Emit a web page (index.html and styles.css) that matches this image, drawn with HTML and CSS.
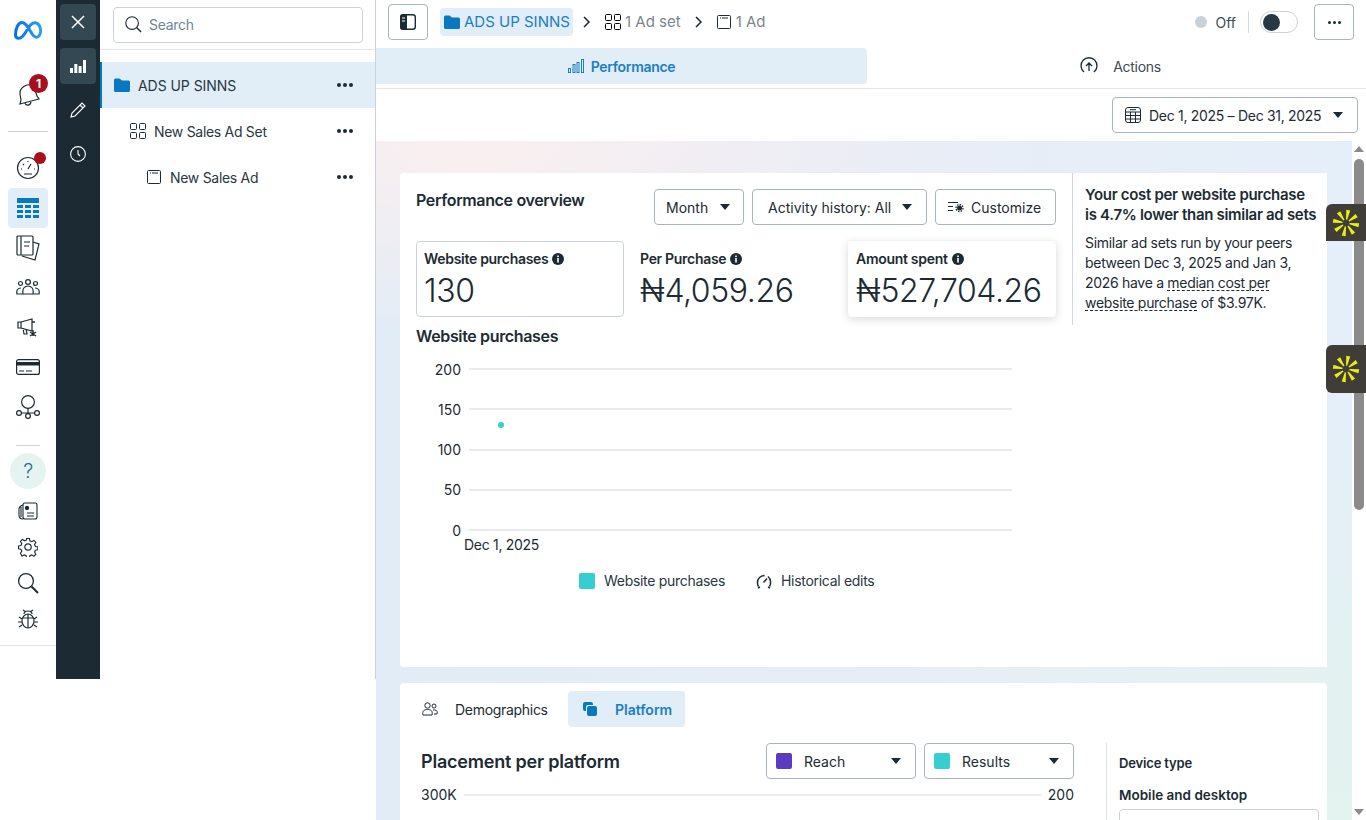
FILE: index.html
```html
<!DOCTYPE html>
<html lang="en">
<head>
  <meta charset="UTF-8" />
  <title>Ads Manager</title>
  <link rel="stylesheet" href="styles.css">
</head>
<body>
  <!-- Global nav rail -->
  <nav class="rail">
    <div class="rail-logo">
      <svg width="30" height="21" viewBox="0 0 30 21"><defs><linearGradient id="metaGrad" x1="0" y1="0" x2="1" y2="0"><stop offset="0" stop-color="#0a6fe8"/><stop offset="1" stop-color="#25a0f5"/></linearGradient></defs><path d="M2.500 15C2.500 9 5 2.500 9 2.500C13 2.500 16 9 19.500 14.500C21.500 17.500 24 18 26 16C28 13.500 28 9 26.500 6C24.500 2 20.500 1.500 17.500 5C14.500 8.500 12.500 13.500 9.500 16.500C7 19 2.500 19 2.500 15Z" fill="none" stroke="url(#metaGrad)" stroke-width="3"/></svg>
    </div>
    <div class="rail-item rail-bell">
      <svg class="ico" width="24" height="26" viewBox="0 0 24 26"><path d="M11 4c4-1 7 1 8 5l2 6 2 3-19 5 1-4-1-6c-1-4 3-8 7-9zM9 22c1 3 5 3 6-1" fill="none" stroke="#1c2b33" stroke-width="1.200"/></svg>
      <span class="badge">1</span>
    </div>
    <div class="rail-rule"></div>
    <div class="rail-item rail-gauge">
      <svg width="24" height="24" viewBox="0 0 24 24" fill="none" stroke="#1c2b33" stroke-width="1.200"><circle cx="12" cy="12" r="10.500"/><path d="M12 13l3-5M5 13h1M18 13h1M7 8l1 1M12 5v1M8 18h8"/></svg>
      <span class="dot-alert"></span>
    </div>
    <div class="rail-item rail-active">
      <svg width="22" height="20" viewBox="0 0 22 20" fill="#0a78be"><rect width="22" height="5"/><rect y="7" width="6" height="3"/><rect x="8" y="7" width="6" height="3"/><rect x="16" y="7" width="6" height="3"/><rect y="12" width="6" height="3"/><rect x="8" y="12" width="6" height="3"/><rect x="16" y="12" width="6" height="3"/><rect y="17" width="6" height="3"/><rect x="8" y="17" width="6" height="3"/><rect x="16" y="17" width="6" height="3"/></svg>
    </div>
    <div class="rail-item rail-short">
      <svg width="24" height="26" viewBox="0 0 24 26" fill="none" stroke="#1c2b33" stroke-width="1.200"><rect x="1" y="1" width="16" height="19" rx="1"/><path d="M5 1v19M8 7h6M8 11h5M17 7l6 2-4 16-13-4"/></svg>
    </div>
    <div class="rail-item">
      <svg width="24" height="16" viewBox="0 0 24 16" fill="none" stroke="#1c2b33" stroke-width="1.200"><circle cx="12" cy="3" r="2.400"/><circle cx="4.500" cy="4.500" r="2"/><circle cx="19.500" cy="4.500" r="2"/><path d="M7 15c-1-6 2-8 5-8s6 2 5 8zM7 15H1c-1-4 1-6 4-6M17 15h6c1-4-1-6-4-6"/></svg>
    </div>
    <div class="rail-item">
      <svg width="22" height="20" viewBox="0 0 22 20" fill="none" stroke="#1c2b33" stroke-width="1.200"><path d="M1 5h3v6H1zM4 5l11-3v12L4 11zM6 11l1 6h3l-1-5"/><path d="M15 5h3M13 15l6 4m0-4l-6 4M16 13v6" stroke-width="1.400"/></svg>
    </div>
    <div class="rail-item">
      <svg width="24" height="16" viewBox="0 0 24 16"><rect x=".6" y=".6" width="22.800" height="14.800" rx="2" fill="none" stroke="#1c2b33" stroke-width="1.200"/><rect x="1" y="3" width="22" height="3.500" fill="#1c2b33"/><path d="M3 12h5M10 12h6" stroke="#1c2b33"/></svg>
    </div>
    <div class="rail-item">
      <svg width="24" height="24" viewBox="0 0 24 24" fill="none" stroke="#1c2b33" stroke-width="1.200"><circle cx="12" cy="7" r="6.400"/><circle cx="3" cy="18" r="2.400"/><circle cx="12" cy="21" r="2.400"/><circle cx="21" cy="18" r="2.400"/><path d="M12 13v6M5 18h14"/></svg>
    </div>
    <div class="rail-rule rail-rule-short"></div>
    <div class="rail-help"><span>?</span></div>
    <div class="rail-tool">
      <svg width="20" height="18" viewBox="0 0 20 18" fill="none" stroke="#1c2b33" stroke-width="1.100"><rect x="5" y="1" width="14" height="16" rx="2"/><path d="M5 3C2 4 1 5 1 7v6c0 2 1 4 4 4M3 5v10M9 11h7M9 14h7"/><circle cx="9" cy="6" r="1.600" fill="#1c2b33"/></svg>
    </div>
    <div class="rail-tool">
      <svg width="20" height="20" viewBox="0 0 20 20" fill="none" stroke="#1c2b33" stroke-width="1.200"><circle cx="10" cy="10" r="3.200"/><path d="M8.500 1h3l.5 2.600 2 .9 2.300-1.400 2.100 2.100-1.400 2.300.9 2 2.600.5v3l-2.600.5-.9 2 1.400 2.300-2.100 2.100-2.300-1.400-2 .9-.5 2.600h-3l-.5-2.600-2-.9-2.300 1.400L2 16.800l1.400-2.300-.9-2L-.1 12V9l2.600-.5.9-2L2 4.200 4.100 2.100l2.300 1.400 2-.9z" transform="translate(.6 .5) scale(.94)"/></svg>
    </div>
    <div class="rail-tool">
      <svg width="22" height="22" viewBox="0 0 22 22" fill="none" stroke="#1c2b33"><circle cx="9" cy="9" r="7.400" stroke-width="1.300"/><path d="M14.500 14.500L21 21" stroke-width="2"/></svg>
    </div>
    <div class="rail-tool">
      <svg width="20" height="20" viewBox="0 0 20 20" fill="none" stroke="#1c2b33" stroke-width="1.200"><ellipse cx="10" cy="12" rx="6" ry="7"/><path d="M10 5v14M4 9h12M6 5C6 3 8 2 10 2s4 1 4 3M5 1l3 2M15 1l-3 2M1 8l3 2M19 8l-3 2M0 13h4M20 13h-4M1 18l3-2M19 18l-3-2"/></svg>
    </div>
  </nav>

  <!-- Dark tool strip -->
  <aside class="strip">
    <button class="strip-btn strip-on"><svg width="14" height="14" viewBox="0 0 14 14"><path d="M1 1l12 12M13 1L1 13" stroke="#fff" stroke-width="1.500"/></svg></button>
    <button class="strip-btn strip-on"><svg width="16" height="14" viewBox="0 0 16 14" fill="#fff"><rect y="9" width="3" height="5"/><rect x="4.300" y="5" width="3" height="9"/><rect x="8.600" y="7" width="3" height="7"/><rect x="13" y="1" width="3" height="13"/></svg></button>
    <button class="strip-btn"><svg width="16" height="16" viewBox="0 0 16 16" fill="none" stroke="#fff" stroke-width="1.100"><path d="M1 15l1-4L12 1l3 3L5 14zM10 3l3 3"/></svg></button>
    <button class="strip-btn"><svg width="16" height="16" viewBox="0 0 16 16" fill="none" stroke="#fff" stroke-width="1.100"><circle cx="8" cy="8" r="7.400"/><path d="M8 4v4l2 2"/></svg></button>
  </aside>

  <!-- Campaign tree -->
  <section class="tree">
    <div class="tree-search">
      <div class="search-box">
        <svg width="17" height="17" viewBox="0 0 18 18" fill="none" stroke="#1c2b33"><circle cx="7.500" cy="7.500" r="6.700" stroke-width="1.200"/><path d="M12.500 12.500L17 17" stroke-width="1.500"/></svg>
        <span>Search</span>
      </div>
    </div>
    <div class="tree-row tree-selected">
      <svg class="tree-ico" width="16" height="14" viewBox="0 0 16 14"><path d="M0 2a1.500 1.500 0 011.500-1.500h4L8 2.500h6.500A1.500 1.500 0 0116 4v8.500a1.500 1.500 0 01-1.500 1.500h-13A1.500 1.500 0 010 12.500z" fill="#0a78be"/></svg>
      <span class="tree-name">ADS UP SINNS</span>
      <span class="dots"><i></i><i></i><i></i></span>
    </div>
    <div class="tree-row tree-lvl2">
      <svg class="tree-ico" width="16" height="16" viewBox="0 0 16 16" fill="none" stroke="#1c2b33"><rect x=".5" y=".5" width="6" height="6" rx="1"/><rect x="9.500" y=".5" width="6" height="6" rx="1"/><rect x=".5" y="9.500" width="6" height="6" rx="1"/><rect x="9.500" y="9.500" width="6" height="6" rx="1"/></svg>
      <span class="tree-name">New Sales Ad Set</span>
      <span class="dots"><i></i><i></i><i></i></span>
    </div>
    <div class="tree-row tree-lvl3">
      <svg class="tree-ico" width="14" height="14" viewBox="0 0 14 14" fill="none" stroke="#1c2b33"><rect x=".5" y=".5" width="13" height="13" rx="1"/><path d="M3 3h1M5 3h6"/></svg>
      <span class="tree-name">New Sales Ad</span>
      <span class="dots"><i></i><i></i><i></i></span>
    </div>
  </section>

  <main class="main">
    <header class="topbar">
      <button class="icon-btn"><svg width="16" height="16" viewBox="0 0 16 16"><rect x=".7" y=".7" width="14.600" height="14.600" rx="2.500" fill="none" stroke="#1c2b33" stroke-width="1.400"/><path d="M3 0h4v16H3a3 3 0 01-3-3V3a3 3 0 013-3z" fill="#1c2b33"/><path d="M2 4h3M2 7h3" stroke="#fff"/></svg></button>
      <div class="crumb-chip">
        <svg width="16" height="14" viewBox="0 0 16 14"><path d="M0 2a1.500 1.500 0 011.500-1.500h4L8 2.500h6.500A1.500 1.500 0 0116 4v8.500a1.500 1.500 0 01-1.500 1.500h-13A1.500 1.500 0 010 12.500z" fill="#0a78be"/></svg>
        <span>ADS UP SINNS</span>
      </div>
      <svg class="crumb-sep" width="8" height="12" viewBox="0 0 8 12" fill="none" stroke="#1c2b33" stroke-width="1.500"><path d="M1 1l5 5-5 5"/></svg>
      <svg class="crumb-grid" width="16" height="16" viewBox="0 0 16 16" fill="none" stroke="#000"><rect x=".5" y=".5" width="6" height="6" rx="1"/><rect x="9.500" y=".5" width="6" height="6" rx="1"/><rect x=".5" y="9.500" width="6" height="6" rx="1"/><rect x="9.500" y="9.500" width="6" height="6" rx="1"/></svg>
      <span class="crumb-text">1 Ad set</span>
      <svg class="crumb-sep crumb-sep2" width="8" height="12" viewBox="0 0 8 12" fill="none" stroke="#1c2b33" stroke-width="1.500"><path d="M1 1l5 5-5 5"/></svg>
      <svg class="crumb-ad" width="14" height="14" viewBox="0 0 14 14" fill="none" stroke="#1c2b33"><rect x=".5" y=".5" width="13" height="13" rx="1"/><path d="M3 3h1M5 3h6"/></svg>
      <span class="crumb-text">1 Ad</span>
      <div class="topbar-right">
        <span class="status-dot"></span>
        <span class="status-text">Off</span>
        <span class="status-rule"></span>
        <span class="toggle"><i></i></span>
        <button class="icon-btn more-btn"><span class="dots dots-small"><i></i><i></i><i></i></span></button>
      </div>
    </header>

    <div class="tabs">
      <div class="tab tab-on">
        <svg width="16" height="14" viewBox="0 0 16 14" fill="none" stroke="#1a7fc4"><rect x=".5" y="9.500" width="2" height="4"/><rect x="5" y="5.500" width="2" height="8"/><rect x="9" y="3.500" width="2" height="10"/><rect x="13.500" y=".5" width="2" height="13"/></svg>
        <span>Performance</span>
      </div>
      <div class="tab">
        <svg width="18" height="18" viewBox="0 0 18 18" fill="none" stroke="#1c2b33" stroke-width="1.300"><path d="M4 15a8 8 0 1110 0M9 14V6M6 9l3-3 3 3"/></svg>
        <span>Actions</span>
      </div>
    </div>

    <div class="date-row">
      <button class="select date-btn">
        <svg width="16" height="16" viewBox="0 0 16 16" fill="none" stroke="#1c2b33"><rect x=".5" y=".5" width="15" height="15" rx="2.500"/><path d="M.5 5h15M.5 8.500h15M.5 12h15M5.500 5v10.500M10.500 5v10.500M5 2.700h6"/></svg>
        <span>Dec 1, 2025 – Dec 31, 2025</span>
        <i class="caret"></i>
      </button>
    </div>

    <div class="scroll-wrap">
      <div class="content">
        <div class="top-cards">
          <section class="card overview">
            <div class="overview-head">
              <h2>Performance overview</h2>
              <div class="head-btns">
                <button class="select month-btn"><span>Month</span><i class="caret"></i></button>
                <button class="select activity-btn"><span>Activity history: All</span><i class="caret"></i></button>
                <button class="select customize-btn">
                  <svg width="16" height="12" viewBox="0 0 16 12" fill="none" stroke="#1c2b33"><path d="M0 1.500h10M0 5.500h5M0 9.500h5"/><circle cx="11.500" cy="7" r="2.500" fill="#1c2b33" stroke="none"/><circle cx="11.500" cy="7" r="3.500" stroke-dasharray="1.500 1.200" stroke-width="1.300"/></svg>
                  <span>Customize</span>
                </button>
              </div>
            </div>
            <div class="metrics">
              <div class="metric metric-outline">
                <div class="metric-label">Website purchases <svg class="info" viewBox="0 0 12 12"><circle cx="6" cy="6" r="6" fill="#1c2b33"/><rect x="5.200" y="5" width="1.600" height="4.500" fill="#fff"/><rect x="5.200" y="2.500" width="1.600" height="1.600" fill="#fff"/></svg></div>
                <div class="metric-value">130</div>
              </div>
              <div class="metric">
                <div class="metric-label">Per Purchase <svg class="info" viewBox="0 0 12 12"><circle cx="6" cy="6" r="6" fill="#1c2b33"/><rect x="5.200" y="5" width="1.600" height="4.500" fill="#fff"/><rect x="5.200" y="2.500" width="1.600" height="1.600" fill="#fff"/></svg></div>
                <div class="metric-value">₦4,059.26</div>
              </div>
              <div class="metric metric-raised">
                <div class="metric-label">Amount spent <svg class="info" viewBox="0 0 12 12"><circle cx="6" cy="6" r="6" fill="#1c2b33"/><rect x="5.200" y="5" width="1.600" height="4.500" fill="#fff"/><rect x="5.200" y="2.500" width="1.600" height="1.600" fill="#fff"/></svg></div>
                <div class="metric-value">₦527,704.26</div>
              </div>
            </div>
            <h3 class="chart-title">Website purchases</h3>
            <div class="chart">
              <div class="chart-row"><span>200</span><i></i></div>
              <div class="chart-row"><span>150</span><i></i></div>
              <div class="chart-row"><span>100</span><i></i></div>
              <div class="chart-row"><span>50</span><i></i></div>
              <div class="chart-row"><span>0</span><i></i></div>
              <span class="chart-point"></span>
            </div>
            <div class="chart-x">Dec 1, 2025</div>
            <div class="legend">
              <span class="swatch swatch-teal"></span>
              <span class="legend-text">Website purchases</span>
              <svg class="legend-ico" width="16" height="16" viewBox="0 0 16 16" fill="none" stroke="#1c2b33" stroke-width="1.500"><path d="M2.500 13.500a7 7 0 01-1-4 7 7 0 017-7M12 3.500a7 7 0 012.500 6 7 7 0 01-1 4M7.500 9.500l3.500-4"/><path d="M2 15l2-1M14 15l-2-1"/></svg>
              <span class="legend-text">Historical edits</span>
            </div>
          </section>
          <section class="card insight">
            <div class="insight-inner">
              <h4>Your cost per website purchase<br>is 4.7% lower than similar ad sets</h4>
              <p>Similar ad sets run by your peers between Dec 3, 2025 and Jan 3, 2026 have a <span class="dashed">median cost per website purchase</span> of $3.97K.</p>
            </div>
          </section>
        </div>

        <section class="card breakdown">
          <div class="bd-tabs">
            <div class="bd-tab">
              <svg width="16" height="14" viewBox="0 0 16 14" fill="none" stroke="#1c2b33"><circle cx="5.500" cy="3.500" r="2.700"/><circle cx="12" cy="4" r="2"/><path d="M1 13c-1-4 1-5.500 4.500-5.500S11 9 10 13zM11 8c3-.5 5 1 4 4h-3"/></svg>
              <span>Demographics</span>
            </div>
            <div class="bd-tab bd-tab-on">
              <svg width="16" height="16" viewBox="0 0 16 16" fill="#0a78be"><path d="M1 3a2 2 0 012-2h6a2 2 0 012 2v1H6a2 2 0 00-2 2v4H3a2 2 0 01-2-2z"/><rect x="5" y="5" width="10" height="10" rx="2"/></svg>
              <span>Platform</span>
            </div>
          </div>
          <div class="bd-body">
            <div class="bd-main">
              <div class="bd-head">
                <h2>Placement per platform</h2>
                <div class="bd-selects">
                  <button class="select metric-select"><span class="swatch-lg swatch-purple"></span><span>Reach</span><i class="caret"></i></button>
                  <button class="select metric-select"><span class="swatch-lg swatch-teal"></span><span>Results</span><i class="caret"></i></button>
                </div>
              </div>
              <div class="bd-axis"><span>300K</span><i></i><span>200</span></div>
            </div>
            <div class="bd-side">
              <div class="bd-side-title">Device type</div>
              <div class="bd-side-title bd-side-sub">Mobile and desktop</div>
              <div class="bd-side-box"></div>
            </div>
          </div>
        </section>
      </div>

      <div class="scrollbar">
        <i class="sb-up"></i>
        <div class="sb-thumb"></div>
        <i class="sb-down"></i>
      </div>
    </div>

    <!-- Browser extension tabs floating over the page -->
    <div class="ext ext-a"><svg width="28" height="28" viewBox="0 0 28 28"><defs><path id="spoke" d="M13.400 10.500L12 1h4l-1.400 9.500z" fill="#e9ee18"/></defs><g transform="rotate(10 14 14)"><use href="#spoke"/><use href="#spoke" transform="rotate(45 14 14)"/><use href="#spoke" transform="rotate(90 14 14)"/><use href="#spoke" transform="rotate(135 14 14)"/><use href="#spoke" transform="rotate(180 14 14)"/><use href="#spoke" transform="rotate(225 14 14)"/><use href="#spoke" transform="rotate(270 14 14)"/><use href="#spoke" transform="rotate(315 14 14)"/></g></svg></div>
    <div class="ext ext-b"><svg width="28" height="28" viewBox="0 0 28 28"><g transform="rotate(10 14 14)"><use href="#spoke"/><use href="#spoke" transform="rotate(45 14 14)"/><use href="#spoke" transform="rotate(90 14 14)"/><use href="#spoke" transform="rotate(135 14 14)"/><use href="#spoke" transform="rotate(180 14 14)"/><use href="#spoke" transform="rotate(225 14 14)"/><use href="#spoke" transform="rotate(270 14 14)"/><use href="#spoke" transform="rotate(315 14 14)"/></g></svg></div>
  </main>
</body>
</html>
```

FILE: styles.css
```css
* {
  box-sizing: border-box;
}

html, body {
  height: 100%;
}

body {
  margin: 0;
  display: flex;
  height: 820px;
  overflow: hidden;
  background: #fff;
  color: #1c2b33;
  font-family: Inter, "Noto Sans", sans-serif;
  font-size: 14px;
  letter-spacing: -0.3px;
}

button {
  font: inherit;
  letter-spacing: inherit;
  color: inherit;
  background: #fff;
  padding: 0;
}

h2, h3, h4, p {
  margin: 0;
}

/* Nav rail */
.rail {
  width: 56px;
  height: 646px;
  flex: none;
  display: flex;
  flex-direction: column;
  align-items: center;
  border-bottom: 1px solid #dfe3e6;
}

.rail-logo {
  height: 40px;
  margin-top: 10px;
  display: flex;
  align-items: center;
  justify-content: center;
}

.rail-item {
  position: relative;
  width: 40px;
  height: 40px;
  flex: none;
  display: flex;
  align-items: center;
  justify-content: center;
}

.rail-bell {
  margin-top: 24px;
}

.badge {
  position: absolute;
  top: 0;
  right: 0;
  width: 19px;
  height: 19px;
  border-radius: 50%;
  background: #a80f1d;
  color: #fff;
  font-size: 12px;
  font-weight: 700;
  line-height: 19px;
  text-align: center;
}

.rail-rule {
  width: 40px;
  height: 1px;
  flex: none;
  margin: 17px 0 15px;
  background: #cdd3d8;
}

.rail-rule-short {
  width: 24px;
  margin: 18px 0 7px;
}

.rail-gauge {
  height: 41px;
}

.dot-alert {
  position: absolute;
  top: 5px;
  right: 2px;
  width: 12px;
  height: 12px;
  border-radius: 50%;
  background: #a80f1d;
}

.rail-active {
  background: #e1edf7;
  border-radius: 4px;
}

.rail-short {
  height: 39px;
}

.rail-help {
  width: 36px;
  height: 36px;
  flex: none;
  border-radius: 50%;
  background: #e5f4f0;
  color: #2f6f94;
  font-size: 20px;
  font-weight: 300;
  line-height: 36px;
  text-align: center;
  margin-bottom: 4px;
}

.rail-tool {
  width: 40px;
  height: 36px;
  flex: none;
  display: flex;
  align-items: center;
  justify-content: center;
}

/* Dark strip */
.strip {
  width: 44px;
  height: 679px;
  flex: none;
  padding: 4px;
  display: flex;
  flex-direction: column;
  gap: 8px;
  background: #1c2b33;
}

.strip-btn {
  width: 36px;
  height: 36px;
  flex: none;
  display: flex;
  align-items: center;
  justify-content: center;
  border: none;
  border-radius: 4px;
  background: transparent;
}

.strip-on {
  background: #344854;
}

/* Tree */
.tree {
  width: 276px;
  height: 679px;
  flex: none;
  border-right: 1px solid #cbd2d9;
}

.tree-search {
  height: 50px;
  padding: 7px 12px 0 13px;
  margin-bottom: 12px;
  border-bottom: 1px solid #e4e6e8;
}

.search-box {
  height: 36px;
  display: flex;
  align-items: center;
  gap: 7px;
  padding-left: 11px;
  padding-bottom: 1px;
  border: 1px solid #cbd2d9;
  border-radius: 4px;
  color: #6f8594;
}

.tree-row {
  height: 46px;
  display: flex;
  align-items: center;
  padding-right: 22px;
}

.tree-selected {
  padding-left: 12px;
  background: #e1edf7;
  border-left: 2px solid #0a78be;
}

.tree-selected .tree-ico {
  margin-right: 8px;
}

.tree-selected .tree-name {
  letter-spacing: -0.05px;
}

.tree-lvl2 {
  padding-left: 30px;
}

.tree-lvl2 .tree-ico {
  margin-right: 8px;
}

.tree-lvl3 {
  padding-left: 47px;
}

.tree-ico {
  flex: none;
  margin-right: 9px;
}

.tree-name {
  flex: 1;
  color: #29373f;
}

.dots {
  display: flex;
  gap: 2px;
}

.dots i {
  width: 4px;
  height: 4px;
  border-radius: 50%;
  background: #1c2b33;
}

.dots-small i {
  width: 3px;
  height: 3px;
}

/* Main column */
.main {
  position: relative;
  flex: 1;
  min-width: 0;
  height: 820px;
  display: flex;
  flex-direction: column;
}

.topbar {
  height: 44px;
  flex: none;
  display: flex;
  align-items: center;
  padding: 0 12px;
  letter-spacing: 0;
}

.icon-btn {
  width: 40px;
  height: 36px;
  flex: none;
  display: flex;
  align-items: center;
  justify-content: center;
  border: 1px solid #a9b4bf;
  border-radius: 4px;
}

.crumb-chip {
  width: 133px;
  height: 28px;
  flex: none;
  display: flex;
  align-items: center;
  gap: 4px;
  margin-left: 12px;
  padding: 0 0 1px 4px;
  border-radius: 4px;
  background: #e1edf7;
  color: #1a7fc4;
  font-size: 15px;
}

.crumb-sep {
  margin: 0 14px 0 10px;
}

.crumb-sep2 {
  margin-left: 14px;
}

.crumb-grid {
  margin-right: 4px;
}

.crumb-ad {
  margin-right: 5px;
}

.crumb-text {
  color: #7b868e;
  font-size: 15px;
  padding-bottom: 1px;
}

.topbar-right {
  display: flex;
  align-items: center;
  margin-left: auto;
}

.status-dot {
  width: 12px;
  height: 12px;
  border-radius: 50%;
  background: #c9d1d9;
}

.status-text {
  margin-left: 8px;
  color: #3d4a52;
}

.status-rule {
  width: 1px;
  height: 22px;
  margin: 0 11px 0 12px;
  background: #d5d9dc;
}

.toggle {
  width: 38px;
  height: 22px;
  padding: 1px 2px;
  border: 1px solid #cbd2d9;
  border-radius: 11px;
  margin-right: 16px;
}

.toggle i {
  display: block;
  width: 17px;
  height: 17px;
  margin-top: 1px;
  border-radius: 50%;
  background: #263843;
}

.tabs {
  height: 41px;
  flex: none;
  display: flex;
  border-bottom: 1px solid #e4e6e8;
  margin-top: 4px;
  padding-bottom: 4px;
}

.tab {
  width: 491px;
  flex: none;
  display: flex;
  align-items: center;
  justify-content: center;
  gap: 7px;
  border-radius: 0 4px 4px 0;
}

.tab + .tab {
  flex: 1;
  gap: 15px;
  padding-left: 8px;
  color: #3d4a52;
}

.tab-on {
  background: #e1edf7;
  color: #1a7fc4;
  font-weight: 600;
}

.date-row {
  height: 52px;
  flex: none;
  display: flex;
  justify-content: flex-end;
  align-items: center;
  padding-right: 8px;
}

.select {
  height: 36px;
  display: flex;
  align-items: center;
  border: 1px solid #a9b4bf;
  border-radius: 4px;
  white-space: nowrap;
}

.caret {
  width: 0;
  height: 0;
  flex: none;
  border-left: 5.500px solid transparent;
  border-right: 5.500px solid transparent;
  border-top: 6px solid #1c2b33;
}

.date-btn {
  width: 246px;
  padding: 0 14px 0 12px;
  gap: 8px;
}

.date-btn .caret {
  margin-left: auto;
}

/* Scroll region */
.scroll-wrap {
  flex: 1;
  min-height: 0;
  display: flex;
}

.content {
  flex: 1;
  min-width: 0;
  padding: 32px 25px 0 24px;
  overflow: hidden;
  background:
    radial-gradient(500px 200px at 10% 0, #fbeff0 0, transparent 100%),
    radial-gradient(500px 400px at 100% 100%, #e3f3ee 0, transparent 100%),
    linear-gradient(90deg, #e1ecf6 0, #e8edf7 60%, #e5eff9 100%);
}

.scrollbar {
  width: 14px;
  flex: none;
  display: flex;
  flex-direction: column;
  align-items: center;
  background: #fff;
  padding: 5px 0;
}

.sb-up, .sb-down {
  width: 0;
  height: 0;
  flex: none;
  border-left: 5px solid transparent;
  border-right: 5px solid transparent;
}

.sb-up {
  border-bottom: 6px solid #8b8b8b;
}

.sb-down {
  border-top: 6px solid #8b8b8b;
}

.sb-thumb {
  width: 10px;
  height: 351px;
  margin: 7px 0 auto;
  border-radius: 5px;
  background: #8b8b8b;
}

.card {
  background: #fff;
}

.top-cards {
  display: flex;
  height: 494px;
  margin-bottom: 16px;
}

/* Overview card */
.overview {
  width: 672px;
  flex: none;
  padding: 16px;
  border-radius: 4px 0 0 4px;
}

.overview-head {
  display: flex;
  justify-content: space-between;
}

.overview-head h2 {
  padding-top: 1px;
  font-size: 16px;
  font-weight: 600;
  line-height: 20px;
  letter-spacing: -0.35px;
}

.head-btns {
  display: flex;
  gap: 8px;
  letter-spacing: 0;
}

.month-btn {
  width: 90px;
  padding: 0 13px 0 11px;
  justify-content: space-between;
}

.activity-btn {
  width: 175px;
  padding: 0 14px 0 15px;
  justify-content: space-between;
}

.customize-btn {
  width: 121px;
  padding: 0 12px;
  gap: 7px;
}

.metrics {
  display: flex;
  gap: 8px;
  margin-top: 16px;
}

.metric {
  width: 208px;
  height: 76px;
  padding: 8px 7px;
  border: 1px solid transparent;
  border-radius: 4px;
}

.metric-outline {
  border-color: #cbd2d9;
}

.metric-raised {
  box-shadow: 0 2px 8px rgba(28, 43, 51, 0.18);
}

.metric-label {
  display: flex;
  align-items: center;
  gap: 4px;
  font-weight: 600;
  line-height: 18px;
}

.info {
  width: 12px;
  height: 12px;
}

.metric-value {
  margin-top: 4px;
  font-size: 32px;
  font-weight: 300;
  letter-spacing: -0.4px;
  line-height: 38px;
  white-space: nowrap;
}

.chart-title {
  margin-top: 9px;
  font-size: 16px;
  font-weight: 600;
  line-height: 20px;
  letter-spacing: -0.35px;
}

.chart {
  position: relative;
  margin-top: 3px;
  padding-right: 44px;
  letter-spacing: 0;
}

.chart-row {
  height: 40.250px;
  display: flex;
  align-items: center;
  gap: 8px;
}

.chart-row span {
  width: 45px;
  flex: none;
  text-align: right;
}

.chart-row i {
  flex: 1;
  height: 2px;
  background: #e9ebec;
}

.chart-point {
  position: absolute;
  left: 82px;
  top: 73px;
  width: 6px;
  height: 6px;
  border-radius: 50%;
  background: #35cfcf;
}

.chart-x {
  margin-top: -14px;
  padding-left: 48px;
  line-height: 18px;
}

.legend {
  display: flex;
  align-items: center;
  margin-top: 18px;
  padding-left: 163px;
  color: #29373f;
}

.swatch {
  width: 16px;
  height: 16px;
  border-radius: 2px;
  margin-right: 9px;
}

.swatch-teal {
  background: #35cfcf;
}

.swatch-purple {
  background: #5c3bbf;
}

.legend-ico {
  margin: 0 9px 0 31px;
}

/* Insight card */
.insight {
  flex: 1;
  padding-left: 1px;
}

.insight-inner {
  height: 152px;
  padding: 12px 4px 0 12px;
  border-left: 1px solid #cbd8e6;
  margin-left: -1px;
}

.insight h4 {
  font-size: 15px;
  font-weight: 600;
  line-height: 20px;
  white-space: nowrap;
}

.insight p {
  margin-top: 8px;
  padding-right: 8px;
  line-height: 20px;
}

.dashed {
  text-decoration: underline dashed #1c2b33 1px;
  text-underline-offset: 2px;
}

/* Breakdown card */
.breakdown {
  border-radius: 4px 4px 0 0;
  padding: 8px 8px 0 16px;
  height: 140px;
  overflow: hidden;
}

.bd-tabs {
  display: flex;
  gap: 8px;
}

.bd-tab {
  width: 144px;
  height: 36px;
  display: flex;
  align-items: center;
  gap: 17px;
  padding-left: 6px;
  border-radius: 4px;
}

.bd-tab-on {
  width: 117px;
  background: #e1edf7;
  color: #1a7fc4;
  font-weight: 600;
  letter-spacing: 0;
  padding-left: 14px;
}

.bd-body {
  display: flex;
  margin-top: 16px;
}

.bd-main {
  width: 658px;
  padding-left: 5px;
  flex: none;
}

.bd-head {
  display: flex;
  justify-content: space-between;
  align-items: center;
}

.bd-head h2 {
  font-size: 18px;
  font-weight: 600;
  letter-spacing: -0.2px;
}

.bd-selects {
  display: flex;
  gap: 8px;
}

.metric-select {
  width: 150px;
  padding: 0 14px 0 9px;
  letter-spacing: 0;
}

.swatch-lg {
  width: 16px;
  height: 16px;
  margin-right: 12px;
  border-radius: 2px;
}

.metric-select .caret {
  margin-left: auto;
}

.bd-axis {
  display: flex;
  align-items: center;
  margin-top: 7px;
  gap: 7px;
  letter-spacing: 0;
}

.bd-axis i {
  flex: 1;
  height: 2px;
  background: #e9ebec;
}

.bd-side {
  flex: 1;
  margin-left: 32px;
  padding: 12px 0 0 12px;
  border-left: 1px solid #dfe3e6;
}

.bd-side-title {
  font-size: 13px;
  font-weight: 600;
  line-height: 16px;
  letter-spacing: -0.15px;
}

.bd-side-sub {
  margin-top: 16px;
  font-size: 13.500px;
  letter-spacing: 0;
}

.bd-side-box {
  width: 200px;
  height: 36px;
  margin-top: 6px;
  border: 1px solid #cbd2d9;
  border-radius: 4px;
}

/* Extension tabs */
.ext {
  position: absolute;
  right: 0;
  width: 40px;
  display: flex;
  align-items: center;
  justify-content: center;
  background: #403c38;
  border-radius: 6px 0 0 6px;
}

.ext-a {
  top: 204px;
  height: 37px;
  border-bottom-left-radius: 0;
}

.ext-b {
  top: 345px;
  height: 48px;
}
```
